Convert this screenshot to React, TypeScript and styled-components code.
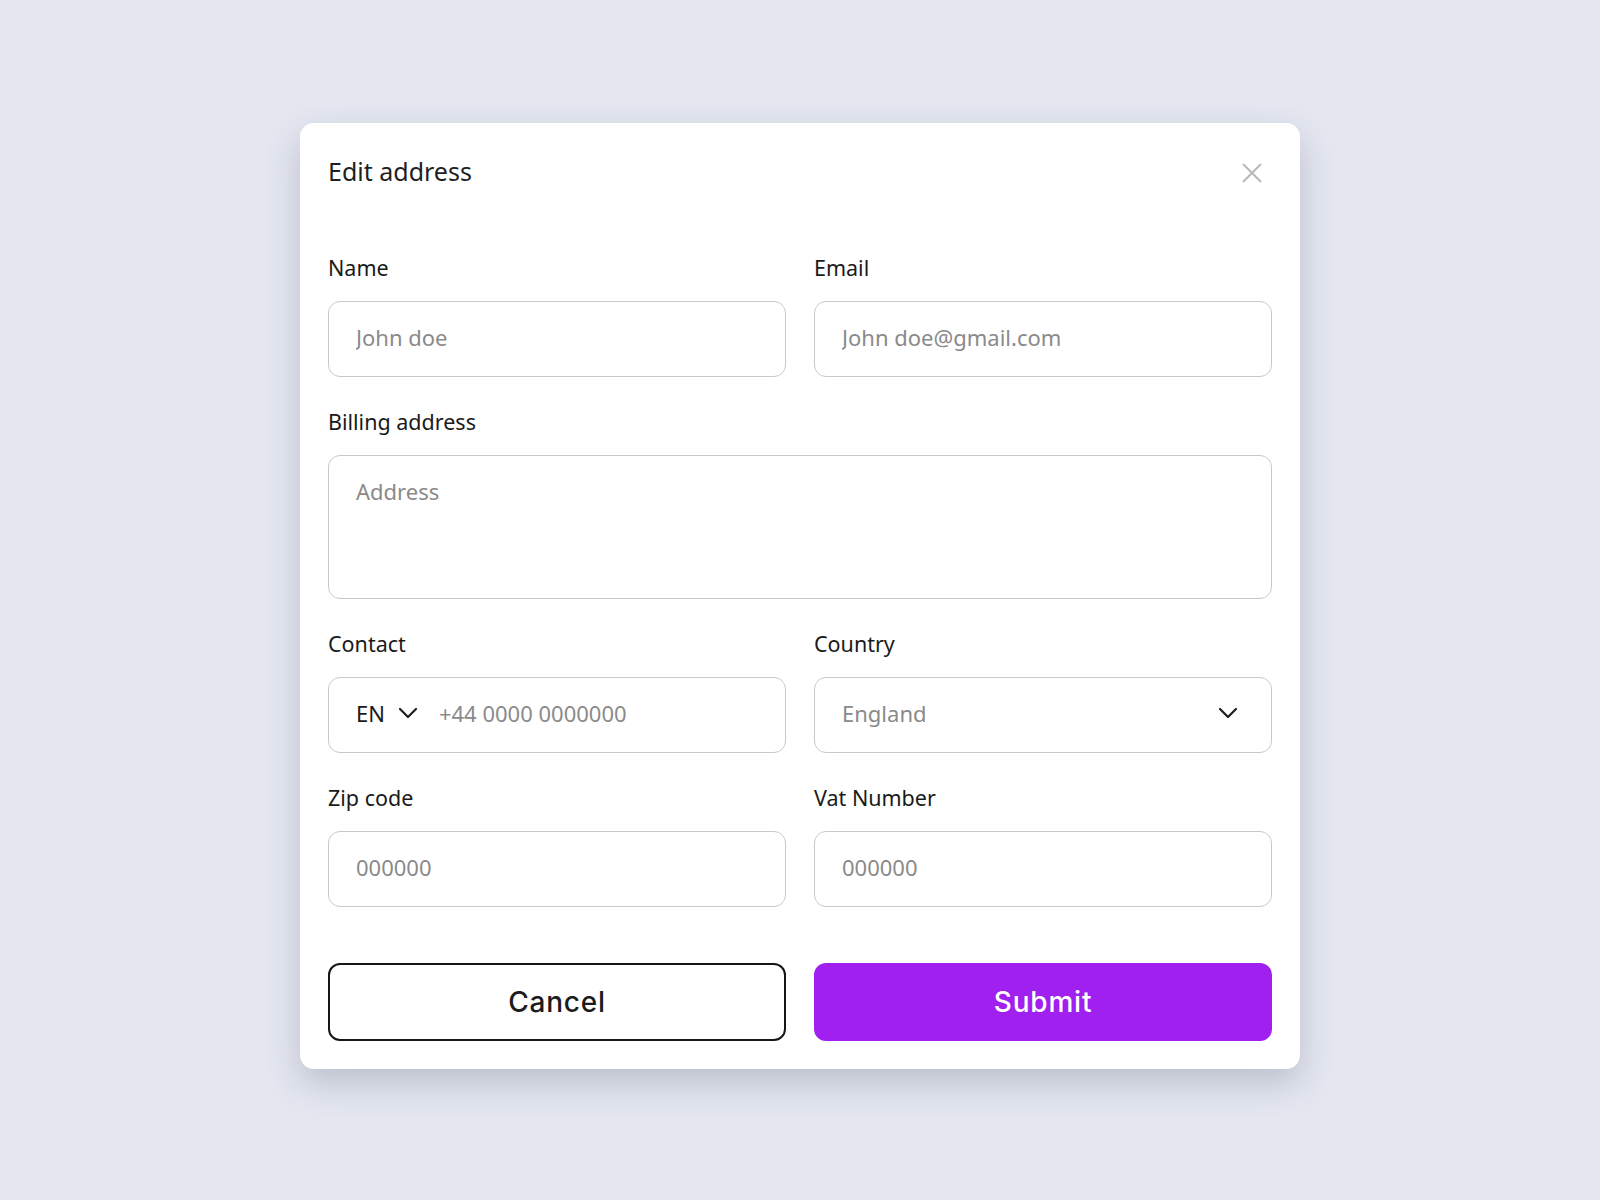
import styled, { createGlobalStyle } from 'styled-components';

const GlobalStyle = createGlobalStyle`
  * {
    box-sizing: border-box;
  }
  body {
    margin: 0;
    background-color: #e4e7f0;
    font-family: 'Noto Sans', 'Open Sans', sans-serif;
  }
`;

const Page = styled.main`
  min-height: 100vh;
  display: flex;
  justify-content: center;
  align-items: flex-start;
  padding-top: 123px;
`;

const Card = styled.section`
  width: 1000px;
  background-color: #ffffff;
  border-radius: 14px;
  padding: 26px 28px 28px;
  box-shadow: 0 14px 34px rgba(60, 66, 90, 0.24);
`;

const Header = styled.header`
  display: flex;
  align-items: center;
  justify-content: space-between;
`;

const Title = styled.h2`
  margin: 0;
  font-size: 25px;
  line-height: 36px;
  font-weight: 400;
  color: #1f1f1f;
`;

const CloseButton = styled.button`
  width: 40px;
  height: 40px;
  padding: 0;
  border: none;
  background: none;
  display: flex;
  align-items: center;
  justify-content: center;
  cursor: pointer;
  margin-top: 4px;
`;

const Form = styled.form`
  margin-top: 62px;
  display: grid;
  grid-template-columns: minmax(0, 1fr) minmax(0, 1fr);
  column-gap: 28px;
  row-gap: 32px;
`;

const Field = styled.div<{ $wide?: boolean }>`
  display: flex;
  flex-direction: column;
  min-width: 0;
  grid-column: ${({ $wide }) => ($wide ? '1 / -1' : 'auto')};
`;

const Label = styled.label`
  font-size: 21.5px;
  line-height: 26px;
  color: #1a1a1a;
  margin-bottom: 20px;
`;

const fieldBase = `
  border: 1.5px solid #c9c9c9;
  border-radius: 12px;
  background: #ffffff;
  font-family: 'Noto Sans', 'Open Sans', sans-serif;
  font-size: 22px;
  color: #1a1a1a;
`;

const TextInput = styled.input`
  ${fieldBase}
  height: 76px;
  padding: 0 27px 5px;
  outline: none;
  width: 100%;
  min-width: 0;
  &::placeholder {
    color: #8a8a8a;
  }
`;

const TextArea = styled.textarea`
  ${fieldBase}
  height: 144px;
  padding: 20px 27px;
  resize: none;
  outline: none;
  line-height: 30px;
  &::placeholder {
    color: #8a8a8a;
  }
`;

const Box = styled.div<{ $spread?: boolean }>`
  ${fieldBase}
  height: 76px;
  display: flex;
  align-items: center;
  padding: ${({ $spread }) => ($spread ? '0 33px 4px 27px' : '0 27px 4px')};
  justify-content: ${({ $spread }) => ($spread ? 'space-between' : 'flex-start')};
`;

const Code = styled.span`
  display: flex;
  align-items: center;
  gap: 13px;
  margin-right: 21px;
  color: #1a1a1a;
`;

const InlineInput = styled.input`
  flex: 1;
  min-width: 0;
  border: none;
  outline: none;
  padding: 0;
  font-family: inherit;
  font-size: 22px;
  color: #1a1a1a;
  &::placeholder {
    color: #8a8a8a;
  }
`;

const SelectValue = styled.span`
  color: #8a8a8a;
`;

const Actions = styled.div`
  margin-top: 56px;
  display: grid;
  grid-template-columns: minmax(0, 1fr) minmax(0, 1fr);
  column-gap: 28px;
`;

const Button = styled.button<{ $primary?: boolean }>`
  height: 78px;
  border-radius: 12px;
  font-family: 'Inter', 'Noto Sans', sans-serif;
  font-size: 28px;
  font-weight: 500;
  letter-spacing: 0.8px;
  cursor: pointer;
  border: 2px solid ${({ $primary }) => ($primary ? '#a020f0' : '#161616')};
  background-color: ${({ $primary }) => ($primary ? '#a020f0' : '#ffffff')};
  color: ${({ $primary }) => ($primary ? '#ffffff' : '#1c1c1c')};
`;

function Chevron() {
  return (
    <svg width="20" height="12" viewBox="0 0 20 12" fill="none">
      <polyline
        points="2,2 10,10 18,2"
        stroke="#1e1e1e"
        strokeWidth="2.2"
        strokeLinecap="round"
        strokeLinejoin="round"
      />
    </svg>
  );
}

function CloseIcon() {
  return (
    <svg width="20" height="20" viewBox="0 0 20 20" fill="none">
      <path d="M1.5 1.5 L18.5 18.5 M18.5 1.5 L1.5 18.5" stroke="#b8b8b8" strokeWidth="2" strokeLinecap="round" />
    </svg>
  );
}

export default function App() {
  return (
    <>
      <GlobalStyle />
      <Page>
        <Card>
          <Header>
            <Title>Edit address</Title>
            <CloseButton type="button" aria-label="Close">
              <CloseIcon />
            </CloseButton>
          </Header>
          <Form>
            <Field>
              <Label>Name</Label>
              <TextInput placeholder="John doe" />
            </Field>
            <Field>
              <Label>Email</Label>
              <TextInput placeholder="John doe@gmail.com" />
            </Field>
            <Field $wide>
              <Label>Billing address</Label>
              <TextArea placeholder="Address" />
            </Field>
            <Field>
              <Label>Contact</Label>
              <Box>
                <Code>
                  EN <Chevron />
                </Code>
                <InlineInput placeholder="+44 0000 0000000" />
              </Box>
            </Field>
            <Field>
              <Label>Country</Label>
              <Box $spread>
                <SelectValue>England</SelectValue>
                <Chevron />
              </Box>
            </Field>
            <Field>
              <Label>Zip code</Label>
              <TextInput placeholder="000000" />
            </Field>
            <Field>
              <Label>Vat Number</Label>
              <TextInput placeholder="000000" />
            </Field>
          </Form>
          <Actions>
            <Button type="button">Cancel</Button>
            <Button type="button" $primary>
              Submit
            </Button>
          </Actions>
        </Card>
      </Page>
    </>
  );
}
